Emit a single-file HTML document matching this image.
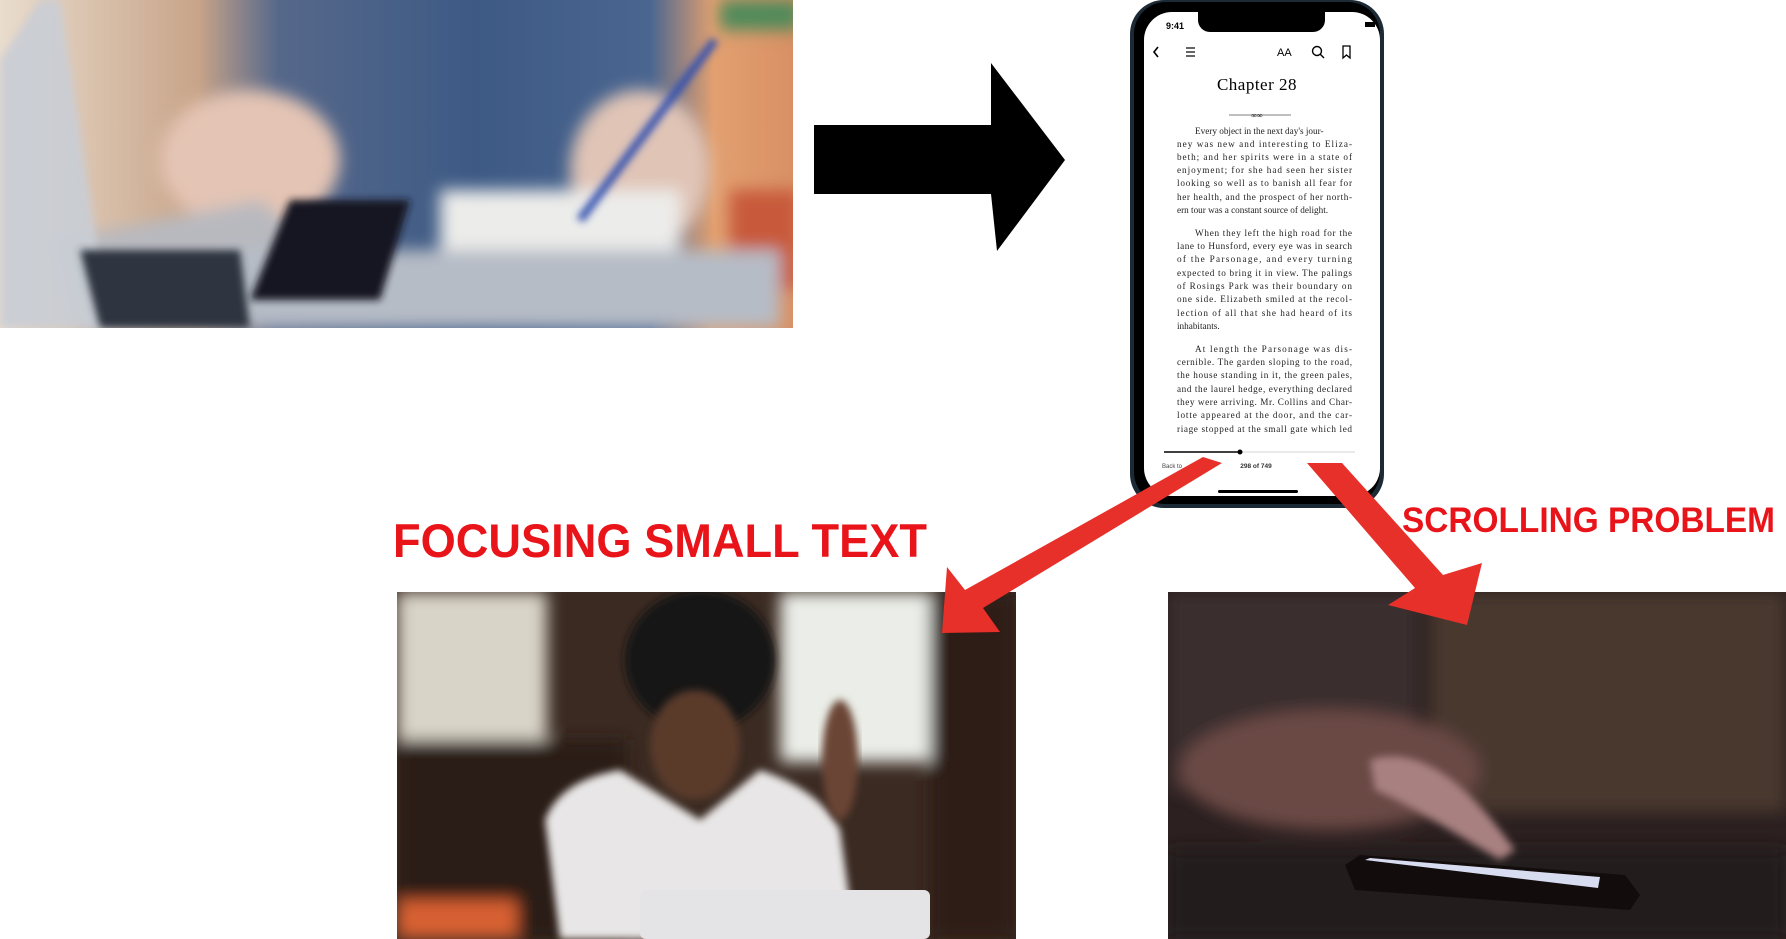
<!DOCTYPE html>
<html><head><meta charset="utf-8"><style>
html,body{margin:0;padding:0;background:#fff;width:1786px;height:939px;overflow:hidden}
svg{position:absolute;left:0;top:0}
</style></head><body>
<svg width="1786" height="939" viewBox="0 0 1786 939" xmlns="http://www.w3.org/2000/svg">
<defs>
<linearGradient id="tl" x1="0" y1="0" x2="1" y2="0">
<stop offset="0" stop-color="#e9dccd"/><stop offset="0.25" stop-color="#c8a489"/><stop offset="0.35" stop-color="#56688a"/><stop offset="0.6" stop-color="#3d5a85"/><stop offset="0.82" stop-color="#4a6690"/><stop offset="0.9" stop-color="#e2a070"/><stop offset="1" stop-color="#d89064"/>
</linearGradient>
<filter id="bl"><feGaussianBlur stdDeviation="8"/></filter>
<filter id="bl2"><feGaussianBlur stdDeviation="4"/></filter>
<clipPath id="c1"><rect x="0" y="0" width="793" height="328"/></clipPath>
<clipPath id="c2"><rect x="397" y="592" width="619" height="347"/></clipPath>
<clipPath id="c3"><rect x="1168" y="592" width="618" height="347"/></clipPath>
</defs>

<!-- top-left photo -->
<g clip-path="url(#c1)">
<rect x="0" y="0" width="793" height="328" fill="url(#tl)"/>
<g filter="url(#bl)">
<rect x="720" y="0" width="80" height="30" fill="#4f8a5a"/>
<rect x="730" y="190" width="70" height="100" fill="#c85a3a"/>
<ellipse cx="250" cy="160" rx="90" ry="70" fill="#e4c4b4"/>
<ellipse cx="640" cy="170" rx="70" ry="80" fill="#e0c4b6"/>
<polygon points="60,240 260,200 330,260 300,328 80,328" fill="#b8b9bf"/>
<rect x="440" y="190" width="240" height="80" fill="#ececea"/>
<rect x="220" y="250" width="560" height="78" fill="#b6bcc6"/>
</g>
<polygon points="0,60 40,0 60,0 110,328 0,328" fill="#c9ced6" opacity="0.9" filter="url(#bl2)"/>
<polygon points="80,250 240,250 250,328 100,328" fill="#2e3440" filter="url(#bl2)"/>
<polygon points="290,200 410,200 380,300 250,300" fill="#151820" filter="url(#bl2)"/>
<line x1="715" y1="40" x2="580" y2="220" stroke="#3050b0" stroke-width="8" filter="url(#bl2)"/>
</g>

<!-- black arrow -->
<polygon points="814,125 991,125 991,63 1065,160 997,251 991,194 814,194" fill="#000"/>

<!-- phone -->
<rect x="1130" y="0" width="254" height="508" rx="34" fill="#1c2a36"/>
<rect x="1134" y="2" width="246" height="502" rx="32" fill="#000"/>
<rect x="1144" y="12" width="236" height="484" rx="28" fill="#fff"/>
<path d="M1198,12 H1325 V20 a12 12 0 0 1 -12 12 H1210 a12 12 0 0 1 -12 -12 Z" fill="#000"/>
<text x="1166" y="29" font-family="Liberation Sans,sans-serif" font-size="9" font-weight="bold">9:41</text>
<rect x="1365" y="22" width="10" height="5" fill="#000"/>
<path d="M1158,47 l-4,5 l4,5" stroke="#000" stroke-width="1.6" fill="none"/>
<g stroke="#000" stroke-width="1.2"><line x1="1186" y1="48" x2="1195" y2="48"/><line x1="1186" y1="52" x2="1195" y2="52"/><line x1="1186" y1="56" x2="1195" y2="56"/></g>
<text x="1277" y="56" font-family="Liberation Sans,sans-serif" font-size="11">AA</text>
<circle cx="1317" cy="51" r="4.5" stroke="#000" stroke-width="1.4" fill="none"/><line x1="1320" y1="54" x2="1324" y2="58" stroke="#000" stroke-width="1.4"/>
<path d="M1343,46 h7 v12 l-3.5,-3 l-3.5,3 z" stroke="#000" stroke-width="1.3" fill="none"/>
<text x="1257" y="90" text-anchor="middle" font-family="Liberation Serif,serif" font-size="17" letter-spacing="0.5">Chapter 28</text>
<line x1="1229" y1="115" x2="1291" y2="115" stroke="#555" stroke-width="0.8"/>
<text x="1257" y="118" text-anchor="middle" font-family="Liberation Serif,serif" font-size="8">∞∞</text>
<g font-family="Liberation Serif,serif" font-size="9.2" fill="#222">
<text x="1195" y="134">Every object in the next day's jour-</text>
<text x="1177" y="147" textLength="175">ney was new and interesting to Eliza-</text>
<text x="1177" y="160" textLength="175">beth; and her spirits were in a state of</text>
<text x="1177" y="173" textLength="175">enjoyment; for she had seen her sister</text>
<text x="1177" y="186" textLength="175">looking so well as to banish all fear for</text>
<text x="1177" y="200" textLength="175">her health, and the prospect of her north-</text>
<text x="1177" y="213">ern tour was a constant source of delight.</text>
<text x="1195" y="236" textLength="157">When they left the high road for the</text>
<text x="1177" y="249" textLength="175">lane to Hunsford, every eye was in search</text>
<text x="1177" y="262" textLength="175">of the Parsonage, and every turning</text>
<text x="1177" y="276" textLength="175">expected to bring it in view. The palings</text>
<text x="1177" y="289" textLength="175">of Rosings Park was their boundary on</text>
<text x="1177" y="302" textLength="175">one side. Elizabeth smiled at the recol-</text>
<text x="1177" y="316" textLength="175">lection of all that she had heard of its</text>
<text x="1177" y="329">inhabitants.</text>
<text x="1195" y="352" textLength="157">At length the Parsonage was dis-</text>
<text x="1177" y="365" textLength="175">cernible. The garden sloping to the road,</text>
<text x="1177" y="378" textLength="175">the house standing in it, the green pales,</text>
<text x="1177" y="392" textLength="175">and the laurel hedge, everything declared</text>
<text x="1177" y="405" textLength="175">they were arriving. Mr. Collins and Char-</text>
<text x="1177" y="418" textLength="175">lotte appeared at the door, and the car-</text>
<text x="1177" y="432" textLength="175">riage stopped at the small gate which led</text>
</g>
<line x1="1164" y1="452" x2="1240" y2="452" stroke="#000" stroke-width="1.5"/>
<line x1="1240" y1="452" x2="1355" y2="452" stroke="#ddd" stroke-width="1.2"/>
<circle cx="1240" cy="452" r="2.5" fill="#000"/>
<text x="1162" y="468" font-family="Liberation Sans,sans-serif" font-size="6" fill="#444">Back to</text>
<text x="1256" y="468" text-anchor="middle" font-family="Liberation Sans,sans-serif" font-size="6.5" font-weight="bold" fill="#333">298 of 749</text>
<rect x="1218" y="490" width="80" height="3" rx="1.5" fill="#000"/>

<!-- text -->
<text x="393" y="557" textLength="534" lengthAdjust="spacingAndGlyphs" font-family="Liberation Sans,sans-serif" font-weight="bold" font-size="47" fill="#e8141a">FOCUSING SMALL TEXT</text>
<text x="1402" y="532" textLength="373" lengthAdjust="spacingAndGlyphs" font-family="Liberation Sans,sans-serif" font-weight="bold" font-size="35" fill="#e8141a">SCROLLING PROBLEM</text>

<!-- bottom-left photo -->
<g clip-path="url(#c2)">
<rect x="397" y="592" width="619" height="347" fill="#3a2a22"/>
<g filter="url(#bl)">
<rect x="397" y="592" width="150" height="150" fill="#d9d4c8"/>
<rect x="780" y="592" width="150" height="170" fill="#ebeee8"/>
<rect x="397" y="740" width="230" height="199" fill="#2a1a14"/>
<rect x="930" y="592" width="86" height="347" fill="#2e1c14"/>
<rect x="397" y="900" width="120" height="39" fill="#d86030"/>
</g>
<ellipse cx="700" cy="660" rx="75" ry="70" fill="#161412" filter="url(#bl2)"/>
<ellipse cx="695" cy="745" rx="45" ry="55" fill="#5a3a2c" filter="url(#bl2)"/>
<path d="M560,939 L545,820 Q560,780 620,770 L700,820 L760,770 Q820,790 840,830 L855,939 Z" fill="#e8e6e6" filter="url(#bl2)"/>
<rect x="640" y="890" width="290" height="49" rx="6" fill="#e4e4e6"/>
<ellipse cx="840" cy="760" rx="18" ry="60" fill="#6a4434" filter="url(#bl2)"/>
</g>

<!-- bottom-right photo -->
<g clip-path="url(#c3)">
<rect x="1168" y="592" width="618" height="347" fill="#2c2020"/>
<g filter="url(#bl)">
<rect x="1168" y="592" width="250" height="200" fill="#3a2e2e"/>
<rect x="1430" y="592" width="356" height="220" fill="#4a382e"/>
<ellipse cx="1330" cy="770" rx="150" ry="60" fill="#6a4a44"/>
<rect x="1168" y="850" width="618" height="89" fill="#241a1a"/>
</g>
<path d="M1370,760 Q1430,740 1500,830 L1515,850 L1500,860 L1450,830 Q1400,800 1375,790 Z" fill="#a88080" filter="url(#bl2)"/>
<polygon points="1345,865 1360,855 1625,875 1640,895 1630,910 1355,890" fill="#120c0c"/>
<polygon points="1365,860 1370,858 1600,877 1598,888" fill="#d8dcf0"/>
</g>

<!-- red arrows -->
<polygon points="1203,457 1222,463 983,608 1000,632 942,633 947,567 965,590" fill="#e8302a"/>
<polygon points="1307,463 1342,463 1443,575 1482,563 1467,625 1388,605 1415,588" fill="#e8302a"/>
</svg>
</body></html>
